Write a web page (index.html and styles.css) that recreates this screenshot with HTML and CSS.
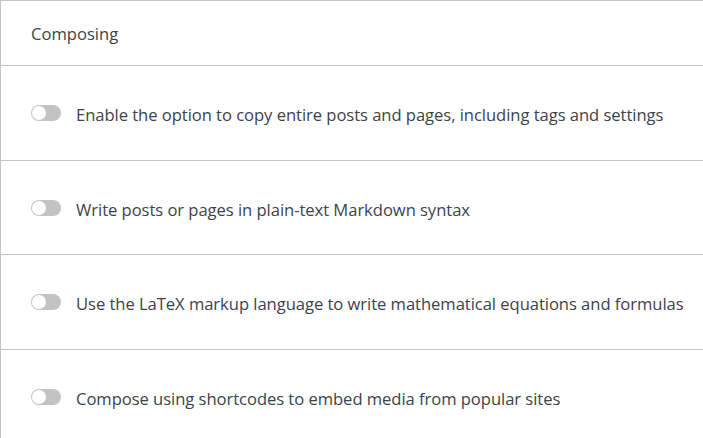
FILE: index.html
```html
<!DOCTYPE html>
<html>
<head>
<meta charset="utf-8">
<link rel="stylesheet" href="styles.css">
</head>
<body>
<div class="card">
  <div class="header">Composing</div>
  <div class="row"><span class="toggle"></span><span class="label">Enable the option to copy entire posts and pages, including tags and settings</span></div>
  <div class="row"><span class="toggle"></span><span class="label">Write posts or pages in plain-text Markdown syntax</span></div>
  <div class="row"><span class="toggle"></span><span class="label">Use the LaTeX markup language to write mathematical equations and formulas</span></div>
  <div class="row last"><span class="toggle"></span><span class="label">Compose using shortcodes to embed media from popular sites</span></div>
</div>
</body>
</html>
```
FILE: styles.css
```css
html, body { margin: 0; padding: 0; background: #fff; }
body { font-family: "Open Sans", "Noto Sans", sans-serif; color: #3c434a; }
.card {
  border-top: 1px solid #c3c4c7;
  border-left: 1px solid #c3c4c7;
  width: 702px;
}
.header {
  height: 65px;
  display: flex;
  align-items: center;
  padding-left: 30px;
  font-size: 16.6px;
  padding-top: 1px;
  box-sizing: border-box;
  border-bottom: 1px solid #c3c4c7;
}
.row {
  height: 93.6px;
  display: flex;
  align-items: center;
  padding-left: 30px;
  border-bottom: 1px solid #c3c4c7;
  font-size: 16.6px;
  letter-spacing: -0.05px;
}
.row.last { border-bottom: none; }
.label { padding-top: 4px; }
.toggle {
  width: 30px; height: 16px;
  border-radius: 8px;
  background: #c2c3c5;
  position: relative;
  flex: none;
  margin-right: 15px;
  margin-top: 1px;
}
.toggle::after {
  content: "";
  position: absolute;
  left: 1px; top: 1px;
  width: 14px; height: 14px;
  border-radius: 50%;
  background: #fff;
}
```
